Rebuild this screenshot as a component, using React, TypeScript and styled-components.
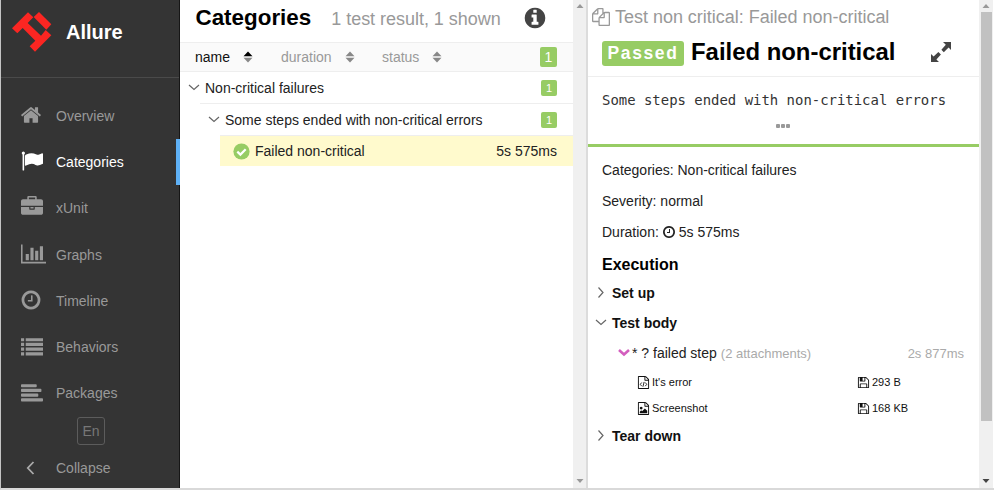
import React from "react";
import styled, { createGlobalStyle } from "styled-components";

const Global = createGlobalStyle`
  * { box-sizing: border-box; }
  body { margin: 0; background: #fff; overflow: hidden; font-family: "Liberation Sans", Arial, sans-serif; font-size: 14px; color: #222; }
  svg { display: block; flex: none; }
`;

/* ---------- icons ---------- */

const paths = {
  home: "M1472 992v480q0 26-19 45t-45 19h-384v-384h-256v384h-384q-26 0-45-19t-19-45v-480q0-1 .5-3t.5-3l575-474 575 474q1 2 1 6zm223-69l-62 74q-8 9-21 11h-3q-13 0-21-7l-692-577-692 577q-12 8-24 7-13-2-21-11l-62-74q-8-10-7-23.5t11-21.5l719-599q32-26 76-26t76 26l244 204v-195q0-14 9-23t23-9h192q14 0 23 9t9 23v408l219 182q10 8 11 21.5t-7 23.5z",
  flag: "M320 256q0 72-64 110v1266q0 13-9.5 22.5t-22.5 9.5h-64q-13 0-22.5-9.5t-9.5-22.5v-1266q-64-38-64-110 0-53 37.5-90.5t90.5-37.5 90.5 37.5 37.5 90.5zm1472 64v763q0 25-12.5 38.5t-39.5 27.5q-215 116-369 116-61 0-123.5-22t-108.5-48-115.5-48-142.5-22q-192 0-464 146-17 9-33 9-26 0-45-19t-19-45v-742q0-32 31-55 21-14 79-43 236-120 421-120 107 0 200 29t219 88q38 19 88 19 54 0 117.5-21t110-47 88-47 54.5-21q26 0 45 19t19 45z",
  briefcase: "M640 256h512v-128h-512v128zm1152 640v480q0 66-47 113t-113 47h-1472q-66 0-113-47t-47-113v-480h672v160q0 26 19 45t45 19h320q26 0 45-19t19-45v-160h672zm-768 0v128h-256v-128h256zm768-480v384h-1792v-384q0-66 47-113t113-47h352v-160q0-40 28-68t68-28h576q40 0 68 28t28 68v160h352q66 0 113 47t47 113z",
  chart: "M640 896v512h-256v-512h256zm384-512v1024h-256v-1024h256zm1024 1152v128h-2048v-1536h128v1408h1920zm-640-896v768h-256v-768h256zm384-384v1152h-256v-1152h256z",
  clock: "M1024 544v448q0 14-9 23t-23 9h-320q-14 0-23-9t-9-23v-64q0-14 9-23t23-9h224v-352q0-14 9-23t23-9h64q14 0 23 9t9 23zm416 352q0-148-73-273t-198-198-273-73-273 73-198 198-73 273 73 273 198 198 273 73 273-73 198-198 73-273zm224 0q0 209-103 385.5t-279.5 279.5-385.5 103-385.5-103-279.5-279.5-103-385.5 103-385.5 279.5-279.5 385.5-103 385.5 103 279.5 279.5 103 385.5z",
  list: "M0 256h256v256H0zM0 640h256v256H0zM0 1024h256v256H0zM0 1408h256v256H0zM384 256h1408v256H384zM384 640h1408v256H384zM384 1024h1408v256H384zM384 1408h1408v256H384z",
  align: "M64 256h1152q64 0 64 64v128q0 64-64 64H64q-64 0-64-64V320q0-64 64-64zM64 640h1536q64 0 64 64v128q0 64-64 64H64q-64 0-64-64V704q0-64 64-64zM64 1024h1280q64 0 64 64v128q0 64-64 64H64q-64 0-64-64v-128q0-64 64-64zM64 1408h1664q64 0 64 64v128q0 64-64 64H64q-64 0-64-64v-128q0-64 64-64z",
  info: "M1152 1376v-160q0-14-9-23t-23-9h-96v-512q0-14-9-23t-23-9h-320q-14 0-23 9t-9 23v160q0 14 9 23t23 9h96v320h-96q-14 0-23 9t-9 23v160q0 14 9 23t23 9h448q14 0 23-9t9-23zm-128-896v-160q0-14-9-23t-23-9h-192q-14 0-23 9t-9 23v160q0 14 9 23t23 9h192q14 0 23-9t9-23zm640 416q0 209-103 385.5t-279.5 279.5-385.5 103-385.5-103-279.5-279.5-103-385.5 103-385.5 279.5-279.5 385.5-103 385.5 103 279.5 279.5 103 385.5z",
  files: "M1696 384q40 0 68 28t28 68v1216q0 40-28 68t-68 28h-960q-40 0-68-28t-28-68v-288h-544q-40 0-68-28t-28-68v-672q0-40 20-88t48-76l408-408q28-28 76-48t88-20h416q40 0 68 28t28 68v328q68-40 128-40h416zm-544 213l-299 299h299v-299zm-640-384l-299 299h299v-299zm196 647l316-316v-416h-384v416q0 40-28 68t-68 28h-416v640h512v-256q0-40 20-88t48-76zm956 804v-1152h-384v416q0 40-28 68t-68 28h-416v640h896z",
  floppy: "M512 1536h768v-384h-768v384zm896 0h128v-896q0-14-10-38.5t-20-34.5l-281-281q-10-10-34-20t-39-10v416q0 40-28 68t-68 28h-576q-40 0-68-28t-28-68v-416h-128v1280h128v-416q0-40 28-68t68-28h832q40 0 68 28t28 68v416zm-384-928v-320q0-13-9.5-22.5t-22.5-9.5h-192q-13 0-22.5 9.5t-9.5 22.5v320q0 13 9.5 22.5t22.5 9.5h192q13 0 22.5-9.5t9.5-22.5zm640 32v928q0 40-28 68t-68 28h-1344q-40 0-68-28t-28-68v-1344q0-40 28-68t68-28h928q40 0 88 20t76 48l280 280q28 28 48 76t20 88z",
  file: "M1596 380q28 28 48 76t20 88v1152q0 40-28 68t-68 28h-1344q-40 0-68-28t-28-68v-1600q0-40 28-68t68-28h896q40 0 88 20t76 48zm-444-244v376h376q-10-29-22-41l-313-313q-12-12-41-22zm384 1528v-1024h-416q-40 0-68-28t-28-68v-416h-768v1536h1280z",
};
type IconName = keyof typeof paths;

const Icon = ({ name, size, wide, children }: { name: IconName; size: number; wide?: boolean; children?: React.ReactNode }) => (
  <svg width={wide ? (size * 2048) / 1792 : size} height={size} viewBox={wide ? "0 0 2048 1792" : "0 0 1792 1792"} fill="currentColor">
    <path d={paths[name]} />
    {children}
  </svg>
);

const Chevron = ({ right, color = "#666", w = 1.2 }: { right?: boolean; color?: string; w?: number }) => (
  <svg width="12" height="12" viewBox="0 0 12 12" fill="none" stroke={color} strokeWidth={w}>
    <path d={right ? "M3.5 0.5 L8 5.5 L3.5 10.5" : "M1 3 L6 7.5 L11 3"} />
  </svg>
);

const Sorter = ({ active }: { active?: boolean }) => (
  <svg width="10" height="12" viewBox="0 0 10 12">
    <path d="M0.5 5.2 L5 0.4 L9.5 5.2Z" fill={active ? "#000" : "#888"} />
    <path d="M0.5 6.8 L5 11.6 L9.5 6.8Z" fill="#888" />
  </svg>
);

const Logo = () => (
  <svg width="40" height="40" viewBox="34 38 120 120" fill="#fb2622">
    <path d="M34 87 L82 39 L98 54 L81 71 L121 109 L135 92 L152 108 L103 157 L87 141 L104 124 L66 86 L50 102Z" />
    <path d="M99 53 L115 38 L152 75 L137 91Z" />
  </svg>
);

/* ---------- frame ---------- */

const Page = styled.div`
  width: 994px; height: 490px; display: flex; overflow: hidden;
  border-left: 1px solid #c4c4c4; border-bottom: 2px solid #d9d9d9; white-space: nowrap;
`;
const Side = styled.aside`
  width: 179px; flex: none; background: #343434; display: flex; flex-direction: column; border-right: 1px solid #161616;
`;
const Brand = styled.div`
  height: 78px; flex: none; border-bottom: 1px solid #4a4a4a; display: flex; gap: 14px; padding: 12px 0 0 11px;
  font-size: 20px; font-weight: bold; color: #fff; line-height: 40px;
`;
const Nav = styled.nav`padding-top: 15px; flex: none; display: flex; flex-direction: column;`;
const NavItem = styled.a<{ $active?: boolean }>`
  height: 46.2px; flex: none; display: flex; align-items: center; padding-left: 20px; margin-right: -1px;
  color: ${(p) => (p.$active ? "#fff" : "#999")};
  border-right: 4px solid ${(p) => (p.$active ? "#5eb0f5" : "transparent")};
`;
const NavIcon = styled.span<{ $narrow?: boolean }>`
  width: 35px; display: flex; padding-bottom: 2px;
  svg { margin-left: ${(p) => (p.$narrow ? "-1px" : 0)}; }
`;
const Lang = styled.div`
  width: 28px; height: 28px; flex: none; margin: 1px 0 0 76px; border: 1px solid #5c5c5c; border-radius: 3px;
  color: #777; display: flex; align-items: center; justify-content: center;
`;
const Collapse = styled(NavItem)`height: 45px; padding-left: 24px;`;
const CollapseIcon = styled.span`width: 31px; display: flex;`;

/* ---------- category tree ---------- */

const Tree = styled.section`width: 393px; flex: none;`;
const TreeHead = styled.header`
  height: 42px; display: flex; align-items: baseline; padding: 5px 26px 0 15.5px;
`;
const TreeTitle = styled.h1`margin: 0; font-size: 22.4px; line-height: 26px; color: #000;`;
const Count = styled.span`margin-left: 20px; font-size: 18px; letter-spacing: -0.03px; color: #999; flex: 1;`;
const InfoIcon = styled.span`color: #444; align-self: flex-start; margin-top: 1px;`;
const SortBar = styled.div`
  height: 30px; background: #fafafa; border: solid #eee; border-width: 1px 0; display: flex; align-items: center; padding: 0 16px 1px 15px;
`;
const SortKey = styled.span<{ $w: number; $active?: boolean }>`
  width: ${(p) => p.$w}px; display: flex; align-items: center; gap: 13px; color: ${(p) => (p.$active ? "#111" : "#999")};
`;
const Badge = styled.span<{ $big?: boolean }>`
  margin-left: auto; width: ${(p) => (p.$big ? 17 : 16)}px; height: ${(p) => (p.$big ? 20 : 16)}px; border-radius: 2px;
  background: #97cc64; color: #fff; font-size: ${(p) => (p.$big ? 14 : 11)}px; display: flex; align-items: center; justify-content: center;
`;
const Row = styled.div<{ $depth: number; $selected?: boolean }>`
  height: ${(p) => (p.$selected ? 30 : 32)}px; margin-left: ${(p) => p.$depth * 20}px;
  padding: 0 16px ${(p) => (p.$selected ? 0 : 1)}px ${(p) => (p.$selected ? 13 : 8)}px;
  display: flex; align-items: center; gap: 5px; color: #222;
  background: ${(p) => (p.$selected ? "#fffacd" : "#fff")};
`;
const Line = styled.div<{ $depth: number }>`height: 1px; margin: -1px 0 0 ${(p) => p.$depth * 20}px; background: #eee;`;
const Time = styled.span`margin-left: auto;`;

const Track = styled.div<{ $w: number; $pad: number }>`
  width: ${(p) => p.$w}px; flex: none; background: #f0f0f0; display: flex; flex-direction: column; align-items: center;
  justify-content: space-between; padding: 4px 0 ${(p) => p.$pad}px;
`;
const Divider = styled.div`width: 2px; flex: none; background: #dcdcdc;`;
const Thumb = styled.div`width: 11px; height: 409px; background: #c1c1c1; margin: 4px 0 auto;`;
const Arrow = ({ down, color }: { down?: boolean; color: string }) => (
  <svg width="8" height="4" viewBox="0 0 8 4"><path d={down ? "M0.5 0H7.5L4 4Z" : "M0.5 4H7.5L4 0Z"} fill={color} /></svg>
);

/* ---------- test details ---------- */

const Detail = styled.section`width: 391px; flex: none; display: flex; flex-direction: column;`;
const Crumb = styled.div`
  height: 34px; display: flex; align-items: center; gap: 5px; padding-left: 4px; color: #999; font-size: 18px; letter-spacing: -0.02px;
`;
const Head = styled.div`
  height: 43px; display: flex; align-items: flex-start; padding: 4px 27px 0 14px; border-bottom: 1px solid #eee;
`;
const Status = styled.span`
  margin-top: 3px; width: 82px; height: 25px; border-radius: 3px; background: #97cc64; color: #fff; font-weight: bold; font-size: 17.5px;
  letter-spacing: 1.6px; display: flex; align-items: center; justify-content: center;
`;
const CaseTitle = styled.h2`margin: 0 auto 0 7px; font-size: 23.9px; line-height: 28px; color: #000;`;
const Expand = styled.span`margin-top: 3px; color: #444;`;
const Message = styled.div`
  height: 70px; border-bottom: 3px solid #97cc64; padding: 14px 0 0 14px;
  font: 13.95px/18px "DejaVu Sans Mono", monospace; color: #333;
`;
const Dots = styled.div`display: flex; gap: 1px; justify-content: center; margin: 15px 16px 0 0;`;
const Dot = styled.i`width: 4px; height: 4px; border-radius: 1px; background: #999;`;
const Facts = styled.div`padding: 7px 0 0 14px;`;
const Fact = styled.div`height: 31px; display: flex; align-items: center; gap: 3px; color: #222;`;
const SubTitle = styled.h3`margin: 0; padding-left: 14px; height: 31px; line-height: 35px; font-size: 16px; color: #000;`;
const Stage = styled.div`
  height: 30px; display: flex; align-items: center; gap: 5px; padding-left: 7px; font-weight: bold; color: #111;
`;
const Step = styled.div`height: 31px; display: flex; align-items: center; padding: 0 15px 1px 30px; color: #222;`;
const StepName = styled.span`margin-left: 2px;`;
const Muted = styled.span<{ $right?: boolean }>`
  color: #aaa; font-size: 13px; margin-left: ${(p) => (p.$right ? "auto" : "4px")};
`;
const Attachment = styled.div`
  height: 26px; display: grid; grid-template-columns: 220px 1fr; padding-left: 49px; font-size: 11px; color: #111;
`;
const Cell = styled.span`display: flex; align-items: center; gap: 2px;`;

const nav: { icon: IconName; label: string; active?: boolean }[] = [
  { icon: "home", label: "Overview" },
  { icon: "flag", label: "Categories", active: true },
  { icon: "briefcase", label: "xUnit" },
  { icon: "chart", label: "Graphs" },
  { icon: "clock", label: "Timeline" },
  { icon: "list", label: "Behaviors" },
  { icon: "align", label: "Packages" },
];

export default function App() {
  return (
    <>
      <Global />
      <Page>
        <Side>
          <Brand><Logo /><span>Allure</span></Brand>
          <Nav>
            {nav.map((n) => (
              <NavItem key={n.label} $active={n.active}>
                <NavIcon $narrow={n.icon === "home" || n.icon === "clock"}>
                  <Icon name={n.icon} size={22} wide={n.icon === "chart"} />
                </NavIcon>
                {n.label}
              </NavItem>
            ))}
          </Nav>
          <Lang>En</Lang>
          <Collapse>
            <CollapseIcon>
              <svg width="12" height="14" viewBox="0 0 12 14" fill="none" stroke="#aaa" strokeWidth="1.8"><path d="M8.5 1 L2.8 7 L8.5 13" /></svg>
            </CollapseIcon>
            Collapse
          </Collapse>
        </Side>

        <Tree>
          <TreeHead>
            <TreeTitle>Categories</TreeTitle>
            <Count>1 test result, 1 shown</Count>
            <InfoIcon><Icon name="info" size={24} /></InfoIcon>
          </TreeHead>
          <SortBar>
            <SortKey $w={86} $active>name<Sorter active /></SortKey>
            <SortKey $w={101}>duration<Sorter /></SortKey>
            <SortKey $w={80}>status<Sorter /></SortKey>
            <Badge $big>1</Badge>
          </SortBar>
          <Row $depth={0}><Chevron />Non-critical failures<Badge>1</Badge></Row>
          <Line $depth={1} />
          <Row $depth={1}><Chevron />Some steps ended with non-critical errors<Badge>1</Badge></Row>
          <Line $depth={2} />
          <Row $depth={2} $selected>
            <svg width="17" height="17" viewBox="0 0 17 17"><circle cx="8.5" cy="8.5" r="8.1" fill="#97cc64" /><path d="M4.3 8.6 L7.4 11.6 L12.7 6.2" stroke="#fff" strokeWidth="2.2" fill="none" /></svg>
            Failed non-critical<Time>5s 575ms</Time>
          </Row>
        </Tree>
        <Track $w={13} $pad={5}><Arrow color="#999" /><Arrow down color="#999" /></Track>
        <Divider />

        <Detail>
          <Crumb><Icon name="files" size={18} />Test non critical: Failed non-critical</Crumb>
          <Head>
            <Status>Passed</Status>
            <CaseTitle>Failed non-critical</CaseTitle>
            <Expand>
              <svg width="22" height="22" viewBox="0 0 22 22" fill="currentColor">
                <path d="M13 1H21V9L18.6 6.6L13.8 11.2L11.4 8.8L15.8 3.8Z M9 21H1V13L3.6 15.6L8.4 11L10.9 13.4L6.4 18.4Z" />
              </svg>
            </Expand>
          </Head>
          <Message>
            Some steps ended with non-critical errors
            <Dots><Dot /><Dot /><Dot /></Dots>
          </Message>
          <Facts>
            <Fact>Categories: Non-critical failures</Fact>
            <Fact>Severity: normal</Fact>
            <Fact>Duration: <Icon name="clock" size={14} /> 5s 575ms</Fact>
          </Facts>
          <SubTitle>Execution</SubTitle>
          <Stage><Chevron right />Set up</Stage>
          <Stage><Chevron />Test body</Stage>
          <Step>
            <Chevron color="#d35ebe" w={2.6} />
            <StepName>* ? failed step</StepName>
            <Muted>(2 attachments)</Muted>
            <Muted $right>2s 877ms</Muted>
          </Step>
          <Attachment>
            <Cell>
              <Icon name="file" size={13}>
                <path d="M650 900L450 1150L650 1400M1140 900L1340 1150L1140 1400M980 820L820 1480" fill="none" stroke="currentColor" strokeWidth="120" />
              </Icon>
              It's error
            </Cell>
            <Cell><Icon name="floppy" size={13} />293 B</Cell>
          </Attachment>
          <Attachment>
            <Cell>
              <Icon name="file" size={13}>
                <path d="M1408 1216v320H384v-192l192-192 128 128 384-384zM576 1024a190 190 0 1 1 1 0z" />
              </Icon>
              Screenshot
            </Cell>
            <Cell><Icon name="floppy" size={13} />168 KB</Cell>
          </Attachment>
          <Stage><Chevron right />Tear down</Stage>
        </Detail>
        <Track $w={14} $pad={5}><Arrow color="#999" /><Thumb /><Arrow down color="#444" /></Track>
      </Page>
    </>
  );
}
